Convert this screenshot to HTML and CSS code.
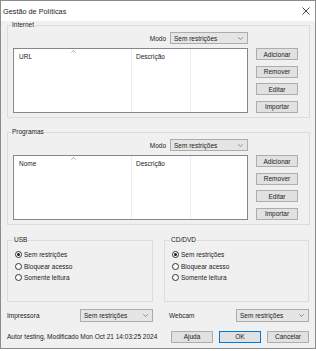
FILE: index.html
```html
<!DOCTYPE html>
<html lang="pt">
<head>
    <meta charset="UTF-8">
    <title>Gestão de Políticas</title>
    <link rel="stylesheet" href="styles.css">
</head>
<body>
    <div class="window">
        <div class="titlebar">
            <span>Gestão de Políticas</span>
            <svg class="close" width="8" height="8" viewBox="0 0 8 8"><path d="M0.5 0.5L7.5 7.5M7.5 0.5L0.5 7.5" stroke="#333" stroke-width="0.9"/></svg>
        </div>

        <div class="body">
            <!-- Internet -->
            <fieldset class="group">
                <legend>Internet</legend>
                <div class="mode-row">
                    <span>Modo</span>
                    <div class="combo mode-combo">Sem restrições<svg width="5" height="3" viewBox="0 0 5 3"><path d="M0.3 0.3L2.5 2.5L4.7 0.3" stroke="#666" stroke-width="0.7" fill="none"/></svg></div>
                </div>
                <div class="list-row">
                    <div class="listview">
                        <div class="col">URL<svg class="sort" width="5" height="3" viewBox="0 0 5 3"><path d="M0.3 2.7L2.5 0.5L4.7 2.7" stroke="#888" stroke-width="0.7" fill="none"/></svg></div>
                        <div class="col">Descrição</div>
                        <div class="col"></div>
                    </div>
                    <div class="btns">
                        <div class="btn">Adicionar</div>
                        <div class="btn">Remover</div>
                        <div class="btn">Editar</div>
                        <div class="btn">Importar</div>
                    </div>
                </div>
            </fieldset>

            <!-- Programas -->
            <fieldset class="group programs">
                <legend>Programas</legend>
                <div class="mode-row">
                    <span>Modo</span>
                    <div class="combo mode-combo">Sem restrições<svg width="5" height="3" viewBox="0 0 5 3"><path d="M0.3 0.3L2.5 2.5L4.7 0.3" stroke="#666" stroke-width="0.7" fill="none"/></svg></div>
                </div>
                <div class="list-row">
                    <div class="listview">
                        <div class="col">Nome<svg class="sort" width="5" height="3" viewBox="0 0 5 3"><path d="M0.3 2.7L2.5 0.5L4.7 2.7" stroke="#888" stroke-width="0.7" fill="none"/></svg></div>
                        <div class="col">Descrição</div>
                        <div class="col"></div>
                    </div>
                    <div class="btns">
                        <div class="btn">Adicionar</div>
                        <div class="btn">Remover</div>
                        <div class="btn">Editar</div>
                        <div class="btn">Importar</div>
                    </div>
                </div>
            </fieldset>

            <!-- USB / CD -->
            <div class="devices">
                <fieldset class="device">
                    <legend>USB</legend>
                    <div class="radio"><span class="dot on"></span>Sem restrições</div>
                    <div class="radio"><span class="dot"></span>Bloquear acesso</div>
                    <div class="radio"><span class="dot"></span>Somente leitura</div>
                </fieldset>
                <fieldset class="device">
                    <legend>CD/DVD</legend>
                    <div class="radio"><span class="dot on"></span>Sem restrições</div>
                    <div class="radio"><span class="dot"></span>Bloquear acesso</div>
                    <div class="radio"><span class="dot"></span>Somente leitura</div>
                </fieldset>
            </div>

            <div class="devices extra">
                <div class="extra-cell">
                    <span>Impressora</span>
                    <div class="combo small-combo">Sem restrições<svg width="5" height="3" viewBox="0 0 5 3"><path d="M0.3 0.3L2.5 2.5L4.7 0.3" stroke="#666" stroke-width="0.7" fill="none"/></svg></div>
                </div>
                <div class="extra-cell right">
                    <span>Webcam</span>
                    <div class="combo small-combo">Sem restrições<svg width="5" height="3" viewBox="0 0 5 3"><path d="M0.3 0.3L2.5 2.5L4.7 0.3" stroke="#666" stroke-width="0.7" fill="none"/></svg></div>
                </div>
            </div>

            <div class="footer">
                <span class="status">Autor testing, Modificado Mon Oct 21 14:03:25 2024</span>
                <div class="btn footer-btn">Ajuda</div>
                <div class="btn footer-btn default">OK</div>
                <div class="btn footer-btn">Cancelar</div>
            </div>
        </div>
    </div>
</body>
</html>
```

FILE: styles.css
```css
* {
    box-sizing: border-box;
}

body {
    margin: 0;
    background-color: #fff;
    font-family: "Liberation Sans", Arial, sans-serif;
    font-size: 6.5px;
    color: #1b1b1b;
}

.window {
    width: 316px;
    height: 349px;
    border: 1px solid #8c8c8c;
    background-color: #f0f0f0;
}

.titlebar {
    height: 20px;
    background-color: #fff;
    display: flex;
    align-items: center;
    justify-content: space-between;
    padding: 0 5px 0 2px;
    font-size: 7.3px;
}

.body {
    padding: 0 5px 0 6px;
}

fieldset {
    margin: 0;
    min-width: 0;
    border: 1px solid #dcdcdc;
}

legend {
    padding: 0 1px;
    margin-left: -2px;
    line-height: 8px;
}

.group {
    padding: 3px 11px 4px 5px;
}

.programs {
    margin-top: 10px;
}

.mode-row {
    display: flex;
    justify-content: flex-end;
    align-items: center;
    gap: 4px;
    height: 12px;
    margin-right: 50px;
    margin-bottom: 4px;
}

.combo {
    height: 12px;
    border: 1px solid #acacac;
    background-color: #e5e5e5;
    display: flex;
    align-items: center;
    justify-content: space-between;
    padding: 0 4px 0 3px;
}

.mode-combo {
    width: 78px;
}

.small-combo {
    width: 73px;
    height: 13px;
}

.list-row {
    display: flex;
    gap: 8px;
    height: 65px;
}

.listview {
    flex: 1;
    border: 1px solid #828790;
    background-color: #fff;
    display: grid;
    grid-template-columns: 118px 59px 1fr;
}

.col {
    position: relative;
    padding: 4px 0 0 5px;
    border-right: 1px solid #e6edf7;
    line-height: 8px;
}

.col + .col {
    padding-left: 4px;
}

.col:last-child {
    border-right: none;
}

.sort {
    position: absolute;
    top: 1px;
    left: 57px;
}

.btns {
    width: 42px;
    display: flex;
    flex-direction: column;
    justify-content: space-between;
}

.btn {
    height: 12px;
    border: 1px solid #adadad;
    background-color: #e1e1e1;
    display: flex;
    align-items: center;
    justify-content: center;
}

.devices {
    display: grid;
    grid-template-columns: 146px 145px;
    column-gap: 11px;
    margin-top: 11px;
}

.device {
    height: 66px;
    padding: 5px 5px 0 7px;
}

.radio {
    display: flex;
    align-items: center;
    gap: 2px;
    height: 11.5px;
}

.dot {
    width: 7px;
    height: 7px;
    border: 1px solid #333;
    border-radius: 50%;
    background-color: #fff;
    display: flex;
    align-items: center;
    justify-content: center;
}

.dot.on::after {
    content: "";
    width: 3px;
    height: 3px;
    border-radius: 50%;
    background-color: #1b1b1b;
}

.extra {
    margin-top: 6px;
}

.extra-cell {
    display: flex;
    align-items: center;
    justify-content: space-between;
    height: 14px;
}

.extra-cell.right {
    padding-left: 5px;
}

.footer {
    display: flex;
    align-items: center;
    gap: 6px;
    height: 13px;
    margin-top: 8px;
    padding-right: 1px;
}

.status {
    flex: 1;
}

.footer-btn {
    width: 42px;
}

.default {
    border-color: #0078d7;
}
```
